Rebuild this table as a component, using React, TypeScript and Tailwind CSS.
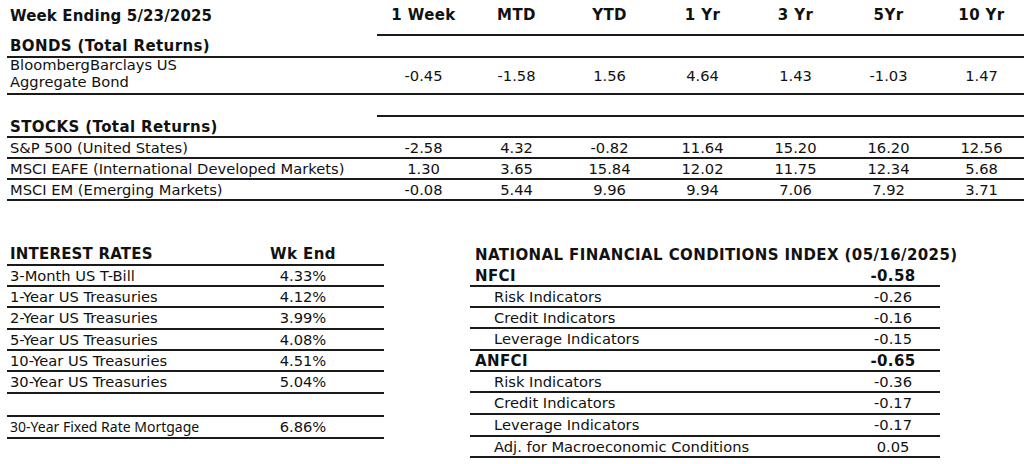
const periods = ["1 Week", "MTD", "YTD", "1 Yr", "3 Yr", "5Yr", "10 Yr"];

const bond = ["-0.45", "-1.58", "1.56", "4.64", "1.43", "-1.03", "1.47"];

const stocks = [
  { name: "S&P 500 (United States)", vals: ["-2.58", "4.32", "-0.82", "11.64", "15.20", "16.20", "12.56"] },
  { name: "MSCI EAFE (International Developed Markets)", vals: ["1.30", "3.65", "15.84", "12.02", "11.75", "12.34", "5.68"] },
  { name: "MSCI EM (Emerging Markets)", vals: ["-0.08", "5.44", "9.96", "9.94", "7.06", "7.92", "3.71"] },
];

const rates = [
  { name: "3-Month US T-Bill", val: "4.33%", h: "h-[21px]" },
  { name: "1-Year US Treasuries", val: "4.12%", h: "h-[21px]" },
  { name: "2-Year US Treasuries", val: "3.99%", h: "h-[22px]" },
  { name: "5-Year US Treasuries", val: "4.08%", h: "h-[21px]" },
  { name: "10-Year US Treasuries", val: "4.51%", h: "h-[21px]" },
  { name: "30-Year US Treasuries", val: "5.04%", h: "h-[22px]" },
];

const nfci = [
  { name: "NFCI", val: "-0.58", bold: true, h: "h-[21px]" },
  { name: "Risk Indicators", val: "-0.26", h: "h-[21px]" },
  { name: "Credit Indicators", val: "-0.16", h: "h-[21px]" },
  { name: "Leverage Indicators", val: "-0.15", h: "h-[22px]" },
  { name: "ANFCI", val: "-0.65", bold: true, h: "h-[21px]" },
  { name: "Risk Indicators", val: "-0.36", h: "h-[21px]" },
  { name: "Credit Indicators", val: "-0.17", h: "h-[22px]" },
  { name: "Leverage Indicators", val: "-0.17", h: "h-[22px]" },
  { name: "Adj. for Macroeconomic Conditions", val: "0.05", h: "h-[21px]" },
];

const line = "border-b-2 border-[#1a1a1a]";
const bold = "font-bold text-[15px] tracking-[0.4px]";

function ValueCells({ vals }: { vals: string[] }) {
  return (
    <>
      {vals.map((v, i) => (
        <div key={i} className={`flex w-[93px] shrink-0 items-center justify-center ${line}`}>
          {v}
        </div>
      ))}
    </>
  );
}

export default function App() {
  return (
    <div className="h-[464px] w-[1024px] overflow-hidden bg-white font-['DejaVu_Sans',sans-serif] text-[14.7px] leading-[18px] text-[#111]">
      {/* returns table */}
      <div className="ml-[7px] flex flex-col">
        <div className={`flex h-[36px] ${bold}`}>
          <div className="flex w-[370px] shrink-0 items-center pl-[3px] pb-[4px] tracking-[0.15px]">Week Ending 5/23/2025</div>
          {periods.map((p) => (
            <div key={p} className={`flex w-[93px] shrink-0 items-center justify-center pb-[4px] ${line}`}>
              {p}
            </div>
          ))}
        </div>
        <div className={`flex h-[22px] ${line}`}>
          <div className={`flex w-[370px] shrink-0 items-center pl-[3px] ${bold}`}>BONDS (Total Returns)</div>
        </div>
        <div className="flex h-[37px]">
          <div className={`w-[370px] shrink-0 pl-[3px] ${line}`}>
            <div className="-mt-[2px] leading-[17px]">
              BloombergBarclays US
              <br />
              Aggregate Bond
            </div>
          </div>
          <ValueCells vals={bond} />
        </div>
        <div className="flex h-[22px]">
          <div className="w-[370px] shrink-0" />
          <ValueCells vals={["", "", "", "", "", "", ""]} />
        </div>
        <div className={`flex h-[21px] ${line}`}>
          <div className={`flex w-[370px] shrink-0 items-center pl-[3px] ${bold}`}>STOCKS (Total Returns)</div>
        </div>
        {stocks.map((s) => (
          <div key={s.name} className="flex h-[21px]">
            <div className={`flex w-[370px] shrink-0 items-center pl-[3px] ${line}`}>{s.name}</div>
            <ValueCells vals={s.vals} />
          </div>
        ))}
      </div>

      <div className="mt-[42px] flex">
        {/* interest rates */}
        <div className="ml-[7px] flex w-[377px] flex-col">
          <div className={`flex h-[23px] items-center ${bold} ${line}`}>
            <div className="w-[243px] pl-[3px] tracking-[0.2px]">INTEREST RATES</div>
            <div className="w-[106px] text-center">Wk End</div>
          </div>
          {rates.map((r) => (
            <div key={r.name} className={`flex items-center ${r.h} ${line}`}>
              <div className="w-[243px] pl-[3px]">{r.name}</div>
              <div className="w-[106px] text-center">{r.val}</div>
            </div>
          ))}
          <div className={`h-[23px] ${line}`} />
          <div className={`flex h-[22px] items-center ${line}`}>
            <div className="w-[243px] pl-[3px] font-['Noto_Sans',sans-serif] text-[14px]">30-Year Fixed Rate Mortgage</div>
            <div className="w-[106px] text-center">6.86%</div>
          </div>
        </div>

        {/* financial conditions */}
        <div className="ml-[86px] flex w-[470px] flex-col">
          <div className={`flex h-[23px] items-center whitespace-nowrap pl-[5px] ${bold}`}>
            NATIONAL FINANCIAL CONDITIONS INDEX (05/16/2025)
          </div>
          {nfci.map((r, i) => (
            <div key={i} className={`flex items-center ${r.h} ${line} ${r.bold ? bold : ""}`}>
              <div className={`w-[376px] ${r.bold ? "pl-[5px]" : "pl-[24px]"}`}>{r.name}</div>
              <div className="w-[94px] text-center">{r.val}</div>
            </div>
          ))}
        </div>
      </div>
    </div>
  );
}
